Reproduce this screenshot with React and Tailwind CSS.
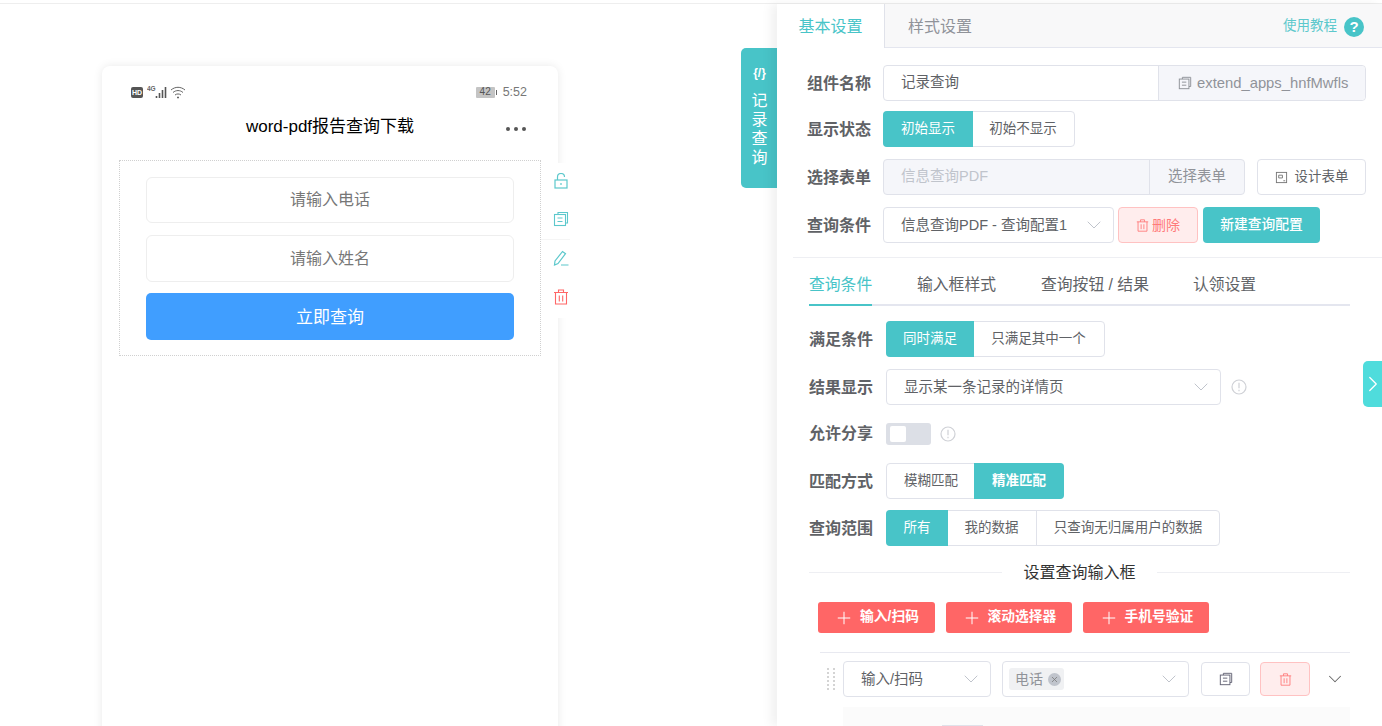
import React from "react";
import { ChevronDown, ChevronRight, Plus, X } from "lucide-react";

const CopyIcon = ({ className }) => (
  <svg viewBox="0 0 16 16" fill="none" stroke="currentColor" strokeWidth="1.1" className={className}>
    <path d="M5 3.5V1.5h9.5v10.5h-2" />
    <rect x="1.5" y="3.5" width="11" height="11" />
    <path d="M4.5 7h5M4.5 10.5h5" />
  </svg>
);

const TrashIcon = ({ className }) => (
  <svg viewBox="0 0 16 16" fill="none" stroke="currentColor" strokeWidth="1.1" className={className}>
    <path d="M1 3.5h14M5.5 3.5V1h5v2.5M2.5 3.5v11.5h11V3.5M6.3 6.5v6M9.7 6.5v6" />
  </svg>
);

const InfoIcon = () => (
  <svg viewBox="0 0 16 16" fill="none" stroke="#cfd1d6" strokeWidth="1.2" className="h-[16px] w-[16px] shrink-0">
    <circle cx="8" cy="8" r="7" />
    <path d="M8 3.8v5.4M8 10.8v1.4" />
  </svg>
);

const Label = ({ children, w = "w-[76px]" }) => (
  <div className={`${w} shrink-0 pt-[1px] text-[16px] font-bold text-[#606266]`}>{children}</div>
);

const Seg = ({ items, active, widths, bold }) => (
  <div className="flex h-[36px] rounded-[4px] border border-[#e0e2ea] text-[13.5px]">
    {items.map((t, i) => (
      <div
        key={t}
        className={`flex items-center justify-center pt-[1px] ${widths[i]} ${i === active ? "-m-px bg-[#48c4c8] text-white" : "text-[#606266]"} ${i === active && bold ? "font-bold" : ""} ${i === 0 ? "rounded-l-[4px]" : ""} ${i === items.length - 1 ? "rounded-r-[4px]" : ""} ${i > 0 && i !== active && i - 1 !== active ? "border-l border-[#e0e2ea]" : ""}`}
      >
        {t}
      </div>
    ))}
  </div>
);

const Select = ({ width, text, className = "" }) => (
  <div className={`flex h-[36px] items-center justify-between rounded-[4px] border border-[#e0e2ea] bg-white pl-[17px] pr-[7px] text-[14.5px] text-[#606266] ${width} ${className}`}>
    <span className="whitespace-nowrap pt-[1px]">{text}</span>
    <ChevronDown className="h-[24px] w-[24px] shrink-0 text-[#c0c4cc]" strokeWidth={1} />
  </div>
);

const RedBtn = ({ width, text }) => (
  <div className={`flex h-[31px] items-center justify-center gap-[6px] rounded-[3px] bg-[#ff6666] text-[13.75px] font-bold text-white ${width}`}>
    <Plus className="h-[20px] w-[20px]" strokeWidth={1.2} />
    {text}
  </div>
);

const Phone = () => (
  <div className="h-[700px] w-[456px] rounded-[8px] bg-white shadow-[0_0_10px_rgba(0,0,0,0.09)]">
    <div className="flex h-[48px] items-center justify-between pl-[29px] pr-[31px] pt-[4px]">
      <div className="flex items-center gap-[4px]">
        <span className="flex h-[11px] w-[12px] items-center justify-center rounded-[2px] bg-[#555] text-[7px] font-bold leading-none text-white">HD</span>
        <svg viewBox="0 0 38 14" className="h-[14px] w-[38px]">
          <text x="0" y="6" fontSize="6.5" fontWeight="700" fill="#666">4G</text>
          <path d="M9.5 11v2M12.5 8v5M15.5 5v8M18.5 2v11" stroke="#555" strokeWidth="1.6" />
          <path d="M24 5c4.2-3.6 9.8-3.6 14 0M26 7.5c3-2.6 7-2.6 10 0M28 10c1.8-1.4 4.2-1.4 6 0" fill="none" stroke="#666" strokeWidth="1" />
          <path d="M30 12.5h2" stroke="#666" strokeWidth="1.4" />
        </svg>
      </div>
      <div className="flex items-center gap-[6px] text-[12.5px] text-[#777]">
        <div className="flex items-center gap-[1px]">
          <span className="flex h-[11px] w-[19px] items-center justify-center rounded-[1px] bg-[#c4c4c4] text-[10px] leading-none text-[#555]">42</span>
          <span className="h-[5px] w-[1px] bg-[#666]" />
        </div>
        5:52
      </div>
    </div>
    <div className="relative flex h-[46px] items-start justify-center text-[17px] text-black">
      word-pdf报告查询下载
      <div className="absolute right-[32px] top-[13px] flex gap-[4px]">
        <span className="h-[4px] w-[4px] rounded-full bg-[#555]" />
        <span className="h-[4px] w-[4px] rounded-full bg-[#555]" />
        <span className="h-[4px] w-[4px] rounded-full bg-[#555]" />
      </div>
    </div>
    <div className="relative ml-[17px] flex h-[196px] w-[422px] flex-col border border-dotted border-[#d0d0d0] px-[26px] pt-[16px]">
      <div className="flex h-[46px] items-center justify-center rounded-[6px] border border-[#eeeeee] text-[16px] text-[#777]">请输入电话</div>
      <div className="mt-[12px] flex h-[47px] items-center justify-center rounded-[6px] border border-[#eeeeee] text-[16px] text-[#777]">请输入姓名</div>
      <div className="mt-[11px] flex h-[47px] items-center justify-center rounded-[5px] bg-[#409eff] pt-[2px] text-[17px] text-white">立即查询</div>
      <div className="absolute left-[421px] top-[2px] flex h-[155px] w-[29px] flex-col items-center bg-white pl-[10px] pt-[10px]">
        <svg viewBox="0 0 16 16" fill="none" stroke="#5cc8cc" strokeWidth="1.2" className="h-[16px] w-[16px] shrink-0">
          <rect x="2" y="7" width="12" height="8" />
          <path d="M4.5 7V4a3.5 3.5 0 0 1 7 0M8 10v2" />
        </svg>
        <CopyIcon className="mt-[22px] h-[16px] w-[16px] shrink-0 text-[#5cc8cc]" />
        <svg viewBox="0 0 16 16" fill="none" stroke="#5cc8cc" strokeWidth="1.2" className="mt-[23px] h-[16px] w-[16px] shrink-0">
          <path d="M1.5 15l.5-4L9.5 1.5l3 2.2L5 13.5zM8 15h7.5" />
        </svg>
        <TrashIcon className="mt-[23px] h-[16px] w-[16px] shrink-0 text-[#ff6666]" />
        <div className="absolute left-0 right-0 top-[76px] h-px bg-[#f5f5f5]" />
      </div>
    </div>
  </div>
);

const Panel = () => (
  <div className="relative z-10 h-full w-[605px] bg-white shadow-[-6px_0_10px_rgba(0,0,0,0.06)]">
    <div className="flex h-[44px] items-center border-b border-[#e4e6ef] bg-[#f8f8f9]">
      <div className="-mb-px flex h-[44px] w-[108px] items-center justify-center border-r border-[#e0e2ea] bg-white pt-[2px] text-[16px] text-[#48c4c8]">基本设置</div>
      <div className="ml-[23px] pt-[3px] text-[16px] text-[#909399]">样式设置</div>
      <div className="ml-auto flex items-center gap-[7px] pr-[18px] pt-[2px] text-[13.5px] text-[#5cc8cc]">
        使用教程
        <span className="flex h-[20px] w-[20px] items-center justify-center rounded-full bg-[#48c4c8] text-[15px] font-bold leading-none text-white">?</span>
      </div>
    </div>

    <div className="pl-[30px] pr-[16px] pt-[17px]">
      <div className="flex items-center">
        <Label>组件名称</Label>
        <div className="flex h-[36px] flex-1 rounded-[4px] border border-[#e0e2ea] text-[14.5px] text-[#606266]">
          <div className="flex flex-1 items-center pl-[17px]">记录查询</div>
          <div className="flex w-[207px] items-center gap-[5px] rounded-r-[4px] border-l border-[#e0e2ea] bg-[#f5f6fa] pl-[19px] text-[14.8px] text-[#909399]">
            <CopyIcon className="h-[14px] w-[14px] shrink-0" />
            extend_apps_hnfMwfls
          </div>
        </div>
      </div>
      <div className="mt-[10px] flex items-center">
        <Label>显示状态</Label>
        <Seg items={["初始显示", "初始不显示"]} active={0} widths={["w-[90px]", "w-[102px]"]} />
      </div>
      <div className="mt-[12px] flex items-center">
        <Label>选择表单</Label>
        <div className="flex h-[36px] w-[362px] rounded-[4px] border border-[#e0e2ea] bg-[#f5f6fa] text-[14.5px]">
          <div className="flex flex-1 items-center pl-[17px] text-[#c0c4cc]">信息查询PDF</div>
          <div className="flex w-[95px] items-center justify-center border-l border-[#e0e2ea] text-[#909399]">选择表单</div>
        </div>
        <div className="ml-[12px] flex h-[36px] w-[109px] items-center justify-center gap-[7px] rounded-[4px] border border-[#e0e2ea] text-[13.5px] text-[#606266]">
          <svg viewBox="0 0 14 14" fill="none" stroke="#777" strokeWidth="1" className="h-[13px] w-[13px] shrink-0">
            <rect x="1.5" y="1.5" width="11" height="11" />
            <path d="M4 4.5h4v3H4zM9 10.5h2" />
          </svg>
          设计表单
        </div>
      </div>
      <div className="mt-[12px] flex items-center">
        <Label>查询条件</Label>
        <Select width="w-[231px]" text="信息查询PDF - 查询配置1" />
        <div className="ml-[4px] flex h-[36px] w-[80px] items-center justify-center gap-[3px] rounded-[4px] border border-[#ffc2c2] bg-[#ffeded] text-[14px] text-[#ff7a7a]">
          <TrashIcon className="h-[13px] w-[13px]" />
          删除
        </div>
        <div className="ml-[5px] flex h-[36px] w-[117px] items-center justify-center rounded-[4px] bg-[#48c4c8] text-[13.75px] font-medium text-white">新建查询配置</div>
      </div>
    </div>

    <div className="ml-[16px] mt-[14px] h-px bg-[#eeeff3]" />

    <div className="pl-[32px] pr-[32px]">
      <div className="flex h-[48px] items-end border-b-2 border-[#e4e6ef] text-[15.8px] text-[#606266]">
        <div className="-mb-[2px] w-[63px] whitespace-nowrap border-b-2 border-[#48c4c8] pb-[7px] text-[#48c4c8]">查询条件</div>
        <div className="ml-[45px] pb-[7px]">输入框样式</div>
        <div className="ml-[45px] pb-[7px]">查询按钮 / 结果</div>
        <div className="ml-[44px] pb-[7px]">认领设置</div>
      </div>

      <div className="mt-[15px] flex items-center">
        <Label w="w-[77px]">满足条件</Label>
        <Seg items={["同时满足", "只满足其中一个"]} active={0} widths={["w-[88px]", "w-[131px]"]} />
      </div>
      <div className="mt-[12px] flex items-center">
        <Label w="w-[77px]">结果显示</Label>
        <Select width="w-[335px]" text="显示某一条记录的详情页" />
        <div className="ml-[10px]"><InfoIcon /></div>
      </div>
      <div className="mt-[16px] flex items-center">
        <Label w="w-[77px]">允许分享</Label>
        <div className="flex h-[22px] w-[45px] items-center rounded-[3px] bg-[#dcdfe6] pl-[4px]">
          <div className="h-[16px] w-[16px] rounded-[2px] bg-white" />
        </div>
        <div className="ml-[9px]"><InfoIcon /></div>
      </div>
      <div className="mt-[17px] flex items-center">
        <Label w="w-[77px]">匹配方式</Label>
        <Seg items={["模糊匹配", "精准匹配"]} active={1} widths={["w-[88px]", "w-[90px]"]} bold />
      </div>
      <div className="mt-[11px] flex items-center">
        <Label w="w-[77px]">查询范围</Label>
        <Seg items={["所有", "我的数据", "只查询无归属用户的数据"]} active={0} widths={["w-[62px]", "w-[89px]", "w-[183px]"]} />
      </div>

      <div className="mt-[14px] flex items-center text-[16px] text-[#333]">
        <div className="h-px w-[193px] bg-[#eeeff3]" />
        <div className="mx-auto pt-[1px]">设置查询输入框</div>
        <div className="h-px w-[193px] bg-[#eeeff3]" />
      </div>

      <div className="ml-[9px] mt-[17px] flex gap-[11px]">
        <RedBtn width="w-[117px]" text="输入/扫码" />
        <RedBtn width="w-[126px]" text="滚动选择器" />
        <RedBtn width="w-[126px]" text="手机号验证" />
      </div>

      <div className="ml-[11px] mt-[19px] h-px bg-[#e8e9f0]" />

      <div className="mt-[8px] flex items-center pl-[18px]">
        <div className="grid w-[9px] grid-cols-2 gap-x-[3px] gap-y-[2px]">
          {Array.from({ length: 12 }).map((_, i) => (
            <span key={i} className="h-[2px] w-[2px] bg-[#d4d4d4]" />
          ))}
        </div>
        <Select width="w-[148px]" text="输入/扫码" className="ml-[7px]" />
        <div className="ml-[11px] flex h-[36px] w-[187px] items-center justify-between rounded-[4px] border border-[#e0e2ea] pl-[6px] pr-[7px]">
          <div className="flex h-[22px] w-[55px] items-center justify-between rounded-[3px] bg-[#f0f1f3] pl-[6px] pr-[3px] text-[14px] text-[#909399]">
            电话
            <span className="flex h-[13px] w-[13px] items-center justify-center rounded-full bg-[#c0c4cc]">
              <X className="h-[9px] w-[9px] text-[#777]" strokeWidth={2} />
            </span>
          </div>
          <ChevronDown className="h-[24px] w-[24px] text-[#c0c4cc]" strokeWidth={1} />
        </div>
        <div className="ml-[12px] flex h-[34px] w-[49px] items-center justify-center rounded-[4px] border border-[#e0e2ea]">
          <CopyIcon className="h-[14px] w-[14px] text-[#667]" />
        </div>
        <div className="ml-[10px] flex h-[34px] w-[50px] items-center justify-center rounded-[4px] border border-[#ffc2c2] bg-[#ffeded]">
          <TrashIcon className="h-[13px] w-[13px] text-[#ff7a7a]" />
        </div>
        <ChevronDown className="ml-[14px] h-[22px] w-[22px] shrink-0 text-[#666]" strokeWidth={1.1} />
      </div>

      <div className="ml-[34px] mt-[10px] h-[30px] bg-[#fbfbfb] pl-[99px] pt-[18px]">
        <div className="h-px w-[41px] bg-[#e0e2ea]" />
      </div>
    </div>
  </div>
);

export default function App() {
  return (
    <div className="relative h-[726px] w-[1382px] overflow-hidden bg-white font-['Liberation_Sans','Noto_Sans_CJK_SC',sans-serif]">
      <div className="h-[4px] border-b border-[#eeeeee]" />
      <div className="flex h-[722px]">
        <div className="w-[777px] shrink-0 pl-[102px] pt-[62px]">
          <Phone />
        </div>
        <Panel />
      </div>

      <div className="absolute left-[741px] top-[48px] z-0 flex h-[140px] w-[36px] flex-col items-center rounded-l-[5px] bg-[#48c4c8] pl-[1px] pt-[18px] text-white">
        <span className="text-[12px] font-bold leading-[14px]">{"{/}"}</span>
        <div className="mt-[11px] flex flex-col text-[16px] leading-[19px]">
          <span>记</span>
          <span>录</span>
          <span>查</span>
          <span>询</span>
        </div>
      </div>

      <div className="absolute left-[1363px] top-[361px] z-20 flex h-[46px] w-[19px] items-center justify-center rounded-l-[5px] bg-[#4fdcdc] text-white">
        <ChevronRight className="h-[26px] w-[26px] shrink-0" strokeWidth={1.2} />
      </div>
    </div>
  );
}
